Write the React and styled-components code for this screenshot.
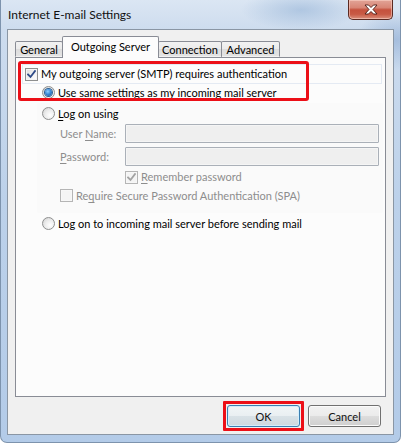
import React from 'react';
import styled, { createGlobalStyle } from 'styled-components';

const Global = createGlobalStyle`
  html, body { margin: 0; padding: 0; background: #ffffff; }
  body { font-family: Lato, "Open Sans", "Liberation Sans", sans-serif; font-size: 11px; color: #000; }
  * { box-sizing: border-box; }
`;

const Window = styled.div`
  width: 401px;
  height: 443px;
  display: flex;
  flex-direction: column;
  border-radius: 0 0 7px 7px;
  overflow: hidden;
  border: 1px solid #7d93ad;
  border-top: none;
  background:
    radial-gradient(ellipse 60px 20px at 300px 10px, rgba(150,180,215,0.6), transparent),
    radial-gradient(ellipse 40px 30px at 395px 40px, rgba(140,170,210,0.6), transparent),
    linear-gradient(to bottom, #dbe6f3 0px, #cddcee 30px, #bcd1ea 200px, #b3cbe8 443px);
`;

const TitleBar = styled.div`
  height: 30px;
  display: flex;
  align-items: center;
  padding-left: 7px;
`;

const TitleText = styled.span`
  font-size: 12px;
  color: #101010;
  flex: 1;
`;

const CloseButton = styled.div`
  align-self: flex-start;
  width: 45px;
  height: 20px;
  margin-right: 7px;
  border: 1px solid #5b2a22;
  border-top: none;
  border-radius: 0 0 5px 5px;
  display: flex;
  align-items: center;
  justify-content: center;
  background: linear-gradient(to bottom, #e2a497 0%, #d88676 40%, #c5513d 52%, #c85a45 75%, #da8f7c 100%);
  box-shadow: inset 0 0 0 1px rgba(255, 220, 210, 0.5);
`;

const Client = styled.div`
  flex: 1;
  margin: 0 6px 7px 6px;
  border: 1px solid #8a96a4;
  background: #f0f0f0;
  display: flex;
  flex-direction: column;
  padding: 6px 7px 3px 7px;
`;

const TabStrip = styled.div`
  height: 22px;
  margin-bottom: -1px;
  display: flex;
  align-items: flex-end;
  position: relative;
  z-index: 1;
`;

const Tab = styled.div`
  width: ${(p) => p.$w}px;
  margin-left: ${(p) => (p.$first ? 0 : -1)}px;
  height: ${(p) => (p.$active ? 22 : 16)}px;
  margin-bottom: ${(p) => (p.$active ? 0 : 1)}px;
  padding-bottom: ${(p) => (p.$active ? 3 : 0)}px;
  border: 1px solid #898c95;
  border-bottom: ${(p) => (p.$active ? 'none' : '1px solid transparent')};
  border-radius: 2px 2px 0 0;
  display: flex;
  align-items: center;
  justify-content: center;
  position: relative;
  z-index: ${(p) => (p.$active ? 2 : 1)};
  background: ${(p) =>
    p.$active
      ? '#fcfcfc'
      : 'linear-gradient(to bottom, #f2f2f2 0%, #ebebeb 50%, #dddddd 51%, #e3e3e3 100%)'};
  font-size: 11px;
  color: #000;
  white-space: nowrap;
`;

const Panel = styled.div`
  height: 340px;
  border: 1px solid #898c95;
  background: #fcfcfc;
  position: relative;
  display: flex;
  flex-direction: column;
  padding: 6px 3px 0 6px;
`;

const GroupBox = styled.div`
  height: 20px;
  border: 1px solid #e4eaf3;
  display: flex;
  align-items: center;
  padding-left: 2px;
  gap: 3px;
`;

const SubGroup = styled.div`
  position: absolute;
  left: 21px;
  top: 45px;
  width: 346px;
  height: 110px;
  background: #fafafa;
  border-radius: 2px;
`;

const Row = styled.div`
  position: relative;
  height: ${(p) => p.$h || 17}px;
  margin-top: ${(p) => p.$top || 0}px;
  margin-left: ${(p) => p.$indent || 0}px;
  display: flex;
  align-items: center;
  gap: 3px;
`;

const Label = styled.span`
  color: ${(p) => (p.$disabled ? '#8d8d8d' : '#000')};
  width: ${(p) => (p.$w ? `${p.$w}px` : 'auto')};
  flex: none;
  white-space: nowrap;
  line-height: 16px;
`;

const U = styled.span`
  text-decoration: underline;
  text-underline-offset: 2px;
`;

const Field = styled.div`
  flex: 1;
  height: 19px;
  margin-right: 3px;
  border: 1px solid #aab0b8;
  border-radius: 1px;
  background: #efefef;
  box-shadow: inset 0 0 0 1px #f5f5f5;
`;

const Box = styled.div`
  width: 13px;
  height: 13px;
  flex: none;
  border: 1px solid ${(p) => (p.$disabled ? '#b5b5b5' : '#8e8f8f')};
  background: ${(p) =>
    p.$disabled ? '#f4f4f4' : 'linear-gradient(135deg, #dcdcdc 0%, #f0f0f0 50%, #ffffff 100%)'};
  box-shadow: inset 0 0 0 1px ${(p) => (p.$disabled ? '#f7f7f7' : '#f4f4f4')};
  display: flex;
  align-items: center;
  justify-content: center;
`;

const Radio = styled.div`
  width: 13px;
  height: 13px;
  flex: none;
  border-radius: 50%;
  border: 1px solid #8e8f8f;
  background: radial-gradient(circle at 65% 65%, #ffffff 0%, #eeeeee 45%, #cfcfcf 100%);
  display: flex;
  align-items: center;
  justify-content: center;
`;

const RadioDot = styled.div`
  width: 7px;
  height: 7px;
  border-radius: 50%;
  background: radial-gradient(circle at 40% 35%, #8fd0ff 0%, #3d8ad6 45%, #0f4d8c 100%);
  box-shadow: 0 0 0 1px #2b5f93;
`;

const Annotation = styled.div`
  position: absolute;
  left: 2px;
  top: 3px;
  width: 291px;
  height: 40px;
  border: 3px solid #ec0f17;
  border-radius: 3px;
  pointer-events: none;
  z-index: 3;
`;

const ButtonRow = styled.div`
  margin-top: 4px;
  height: 30px;
  display: flex;
  justify-content: flex-end;
  align-items: center;
  gap: 4px;
  padding-right: 5px;
`;

const Highlight = styled.div`
  border: 3px solid #ec0f17;
  border-radius: 1px;
  padding: 1px;
  display: flex;
`;

const Button = styled.div`
  width: 73px;
  height: 22px;
  border-radius: 3px;
  border: 1px solid ${(p) => (p.$default ? '#3c7fb1' : '#707070')};
  box-shadow: inset 0 0 0 1px ${(p) => (p.$default ? '#d3eefb' : '#fbfbfb')};
  background: ${(p) =>
    p.$default
      ? 'linear-gradient(to bottom, #f1f5f7 0%, #e9eff2 50%, #d9e2e7 51%, #cfd9df 100%)'
      : 'linear-gradient(to bottom, #f2f2f2 0%, #ebebeb 50%, #dddddd 51%, #cfcfcf 100%)'};
  display: flex;
  align-items: center;
  justify-content: center;
  font-size: 11px;
  color: #111;
`;

const CheckMark = ({ color }) => (
  <svg width="9" height="9" viewBox="0 0 9 9">
    <path d="M1 4.5 L3.5 7 L8 1" fill="none" stroke={color} strokeWidth="1.8" strokeLinecap="square" />
  </svg>
);

const CloseGlyph = () => (
  <svg width="14" height="11" viewBox="0 0 14 11">
    <path
      d="M1 1 H4.5 L7 3.5 L9.5 1 H13 L9 5.5 L13 10 H9.5 L7 7.5 L4.5 10 H1 L5 5.5 Z"
      fill="#ffffff"
      stroke="#4a1a12"
      strokeWidth="0.9"
      strokeLinejoin="round"
    />
  </svg>
);

export default function App() {
  return (
    <>
      <Global />
      <Window>
        <TitleBar>
          <TitleText>Internet E-mail Settings</TitleText>
          <CloseButton>
            <CloseGlyph />
          </CloseButton>
        </TitleBar>
        <Client>
          <TabStrip>
            <Tab $w={48} $first>General</Tab>
            <Tab $w={97} $active>Outgoing Server</Tab>
            <Tab $w={64}>Connection</Tab>
            <Tab $w={59}>Advanced</Tab>
          </TabStrip>
          <Panel>
            <SubGroup />
            <GroupBox>
              <Box>
                <CheckMark color="#2e4a87" />
              </Box>
              <Label>My outgoing server (SMTP) requires authentication</Label>
            </GroupBox>
            <Row $indent={20}>
              <Radio>
                <RadioDot />
              </Radio>
              <Label>Use same settings as my incoming mail server</Label>
            </Row>
            <Row $indent={20} $top={4}>
              <Radio />
              <Label><U>L</U>og on using</Label>
            </Row>
            <Row $indent={38} $top={2} $h={19}>
              <Label $disabled $w={62}>User <U>N</U>ame:</Label>
              <Field />
            </Row>
            <Row $indent={38} $top={4} $h={19}>
              <Label $disabled $w={62}><U>P</U>assword:</Label>
              <Field />
            </Row>
            <Row $indent={103} $top={3} $h={16}>
              <Box $disabled>
                <CheckMark color="#a3a3a3" />
              </Box>
              <Label $disabled><U>R</U>emember password</Label>
            </Row>
            <Row $indent={38} $top={2}>
              <Box $disabled />
              <Label $disabled>Re<U>q</U>uire Secure Password Authentication (SPA)</Label>
            </Row>
            <Row $indent={20} $top={11}>
              <Radio />
              <Label>Log on to incoming mail server before sending mail</Label>
            </Row>
            <Annotation />
          </Panel>
          <ButtonRow>
            <Highlight>
              <Button $default>OK</Button>
            </Highlight>
            <Button>Cancel</Button>
          </ButtonRow>
        </Client>
      </Window>
    </>
  );
}
